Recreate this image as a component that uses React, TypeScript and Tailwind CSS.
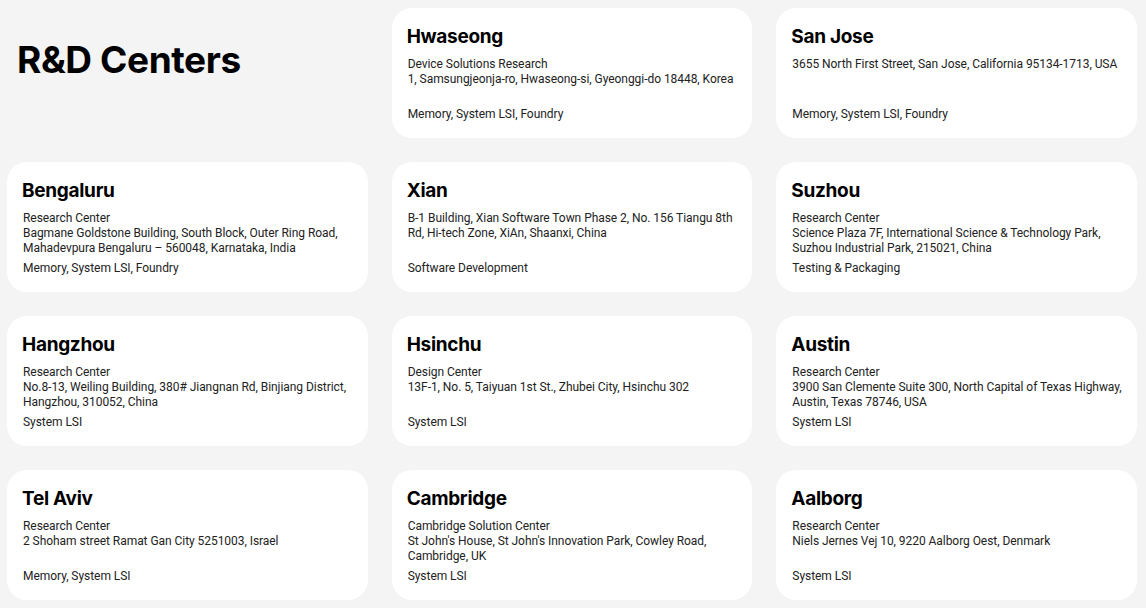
type Center = {
  name: string
  kind?: string
  address: string[]
  tags: string
}

const centers: Center[] = [
  {
    name: "Hwaseong",
    kind: "Device Solutions Research",
    address: ["1, Samsungjeonja-ro, Hwaseong-si, Gyeonggi-do 18448, Korea"],
    tags: "Memory, System LSI, Foundry",
  },
  {
    name: "San Jose",
    address: ["3655 North First Street, San Jose, California 95134-1713, USA"],
    tags: "Memory, System LSI, Foundry",
  },
  {
    name: "Bengaluru",
    kind: "Research Center",
    address: ["Bagmane Goldstone Building, South Block, Outer Ring Road,", "Mahadevpura Bengaluru – 560048, Karnataka, India"],
    tags: "Memory, System LSI, Foundry",
  },
  {
    name: "Xian",
    address: ["B-1 Building, Xian Software Town Phase 2, No. 156 Tiangu 8th", "Rd, Hi-tech Zone, XiAn, Shaanxi, China"],
    tags: "Software Development",
  },
  {
    name: "Suzhou",
    kind: "Research Center",
    address: ["Science Plaza 7F, International Science & Technology Park,", "Suzhou Industrial Park, 215021, China"],
    tags: "Testing & Packaging",
  },
  {
    name: "Hangzhou",
    kind: "Research Center",
    address: ["No.8-13, Weiling Building, 380# Jiangnan Rd, Binjiang District,", "Hangzhou, 310052, China"],
    tags: "System LSI",
  },
  {
    name: "Hsinchu",
    kind: "Design Center",
    address: ["13F-1, No. 5, Taiyuan 1st St., Zhubei City, Hsinchu 302"],
    tags: "System LSI",
  },
  {
    name: "Austin",
    kind: "Research Center",
    address: ["3900 San Clemente Suite 300, North Capital of Texas Highway,", "Austin, Texas 78746, USA"],
    tags: "System LSI",
  },
  {
    name: "Tel Aviv",
    kind: "Research Center",
    address: ["2 Shoham street Ramat Gan City 5251003, Israel"],
    tags: "Memory, System LSI",
  },
  {
    name: "Cambridge",
    kind: "Cambridge Solution Center",
    address: ["St John's House, St John's Innovation Park, Cowley Road,", "Cambridge, UK"],
    tags: "System LSI",
  },
  {
    name: "Aalborg",
    kind: "Research Center",
    address: ["Niels Jernes Vej 10, 9220 Aalborg Oest, Denmark"],
    tags: "System LSI",
  },
]

function CenterCard({ c }: { c: Center }) {
  return (
    <div className="flex h-[130px] flex-col rounded-[20px] bg-white px-4 pt-[17px] pb-4">
      <h3 className="-ml-px font-['Inter',sans-serif] text-[19px] font-bold leading-6 tracking-[-0.3px] text-black">{c.name}</h3>
      <div className="mt-2 whitespace-nowrap font-['Roboto',sans-serif] text-[12px] leading-[15px] tracking-[-0.05px] text-[#222]">
        {c.kind && <div>{c.kind}</div>}
        {c.address.map((line) => (
          <div key={line}>{line}</div>
        ))}
      </div>
      <div className="mt-auto font-['Roboto',sans-serif] text-[12px] leading-[15px] tracking-[-0.05px] text-[#222]">{c.tags}</div>
    </div>
  )
}

export default function App() {
  return (
    <div className="min-h-[608px] w-[1146px] bg-[#f4f4f4] pt-2 pr-[9px] pb-2 pl-[7px]">
      <div className="grid grid-cols-3 gap-x-6 gap-y-6">
        <div className="h-[130px] pt-[32px] pl-[10px]">
          <h1 className="font-['Inter',sans-serif] text-[37px] font-bold leading-10 tracking-[-0.4px] text-black">
            R&amp;D Centers
          </h1>
        </div>
        {centers.map((c) => (
          <CenterCard key={c.name} c={c} />
        ))}
      </div>
    </div>
  )
}
